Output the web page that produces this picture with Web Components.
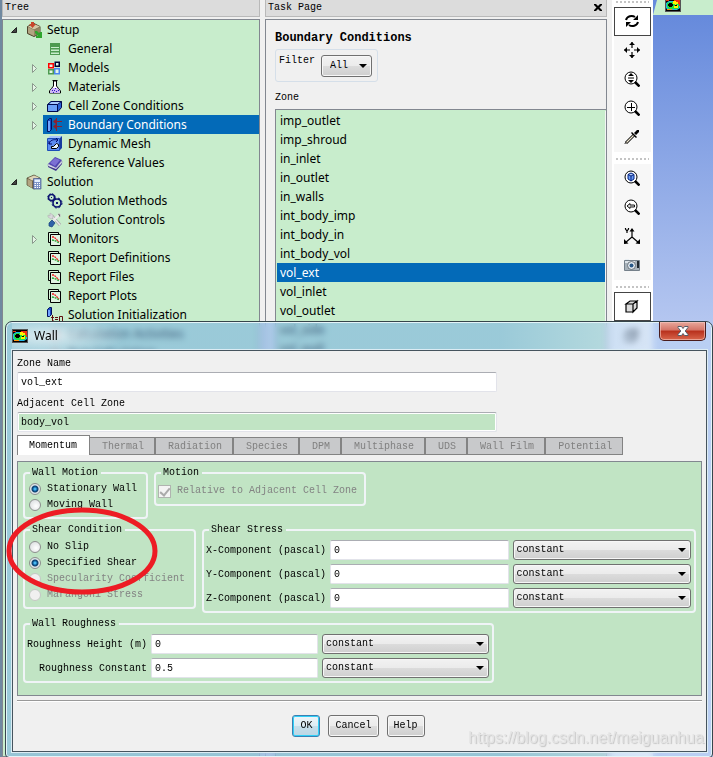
<!DOCTYPE html>
<html lang="en">
<head>
<meta charset="utf-8">
<title>Boundary Conditions - Wall</title>
<style>
html,body{margin:0;height:100%}
body{overflow:hidden;background:#f0f0f0;color:#000;font:10px/12px "Liberation Mono",monospace}
</style>
</head>
<body>
<fluent-desktop></fluent-desktop>

<script>
const ICONS = {
  close:'<path d="M1 1h2l2 2 2-2h2v1L6.500 4.500 9 7v1H7L5 6 3 8H1V7l2.500-2.500L1 2z" fill="#000"/>',
  contour:'<path fill="#555" d="M0 0h16v14H0z"/><path fill="#000" d="M1 1h14v12H1z"/><path fill="#20b8e8" d="M1 5l3-2h11v7l-3 2H3l-2-2z"/><path fill="#20e040" d="M2 5l3-1h9v6l-2 1H4L2 9z"/><path fill="#fff200" d="M8 3h6v3h-3v1h2v3H9V8h1V6H8z"/><path fill="#f03010" d="M1 2h3v1H1zM9 2h6v2h-4V3H9zM13 4h2v4h-1V6h-1z"/><path fill="#000" d="M4 5h3v1h1v2H7v1H4V8H3V6h1zM10 7h2v1h-2z"/><path fill="#ff9010" d="M2 11h5v1H2z"/>',
  box:'<path fill="#776a4c" stroke="#4f452c" d="M1.500 4.500 8 1.500l6 3v7l-6 3-6.500-3z"/><path fill="#b3a582" d="M2 5l6 3v6l-6-3z"/><path fill="#938562" d="M8 8l6-3v6l-6 3z"/><path fill="#d4c8a6" d="M2 4.500 8 2l6 2.500L8 7.500z"/><path fill="#c8452c" d="M5 0h3v2h2L6.500 6 3 2h2z"/><path fill="#2fa52d" d="M9 9h2l2.500 2.500V10H16v6h-6v-2h2L9 11z"/>',
  general:'<path fill="#4d9a50" d="M3 2h10v12H3z"/><path fill="#c8edcc" d="M4 6h8v1H4zM4 8.500h8v1.500H4zM4 11.500h8V13H4z"/>',
  models:'<g fill="#fff8" stroke-width="1.500"><path stroke="#f00" d="M1.750 3.750h4.500v4H1.750z"/><path stroke="#003" d="M8.250 2.250h4v4h-4z"/><path stroke="#4d9a50" d="M1.750 9.750h4.500v4H1.750z"/><path stroke="#4a86f0" d="M7.750 8.750h4.500v5H7.750z"/></g>',
  materials:'<path fill="#fff" stroke="#000" d="M5.500 1.500h5M6.500 2v5L2.500 12v2h11v-2L9.500 7V2z"/><path fill="#cbb8f4" d="M5 9h6l2 3.500V14H3v-1.500z"/><path fill="#3010c8" d="M5 11h1v1H5zM8 9h1v1H8zM9 12h1v1H9zM11 11h1v1h-1zM6 13h1v1H6zM7 11h1v1H7z"/>',
  cell:'<path fill="#2b62d6" stroke="#000a50" d="M.5 6.500 4 3.500h10.500v6L11 13.500H.5z"/><path fill="#6ba0f8" d="M1 7h9v6H1z"/><path fill="#a8c8ff" d="M4.500 4H14l-3 2.500H2z"/><path stroke="#000a50" fill="none" d="M.5 6.500h10v7m0-7 4-3"/>',
  boundary:'<path fill="#1a48c0" stroke="#001060" d="M.5 3.500 2.500 1.500h2v11l-2 2h-2z"/><path fill="#72a4ff" d="M1 4h2v10H1z"/><path fill="none" stroke="#8c2030" d="M9.500 1v13M7 4.500h8M7 9.500h8"/><path fill="#8c2030" d="M6 4.500 9 2v5zM6 9.500 9 7v5z"/>',
  mesh:'<path fill="#5c8cf0" stroke="#1c4db8" d="M.5 2.500h12v12H.5z"/><path fill="#a8c4ff" d="M1 2 3 0h12l-2 2z"/><path fill="#173ca0" d="M13 2l2-2v12l-2 2z"/><path fill="none" stroke="#000b70" d="M2 8c1-4 5-5 8-4M9 2l2 2-2 2M2 5v3h3"/><path fill="#e8f4ff" stroke="#000" d="M4.500 12.500v-2h2l3-3 2 1v2l-2 2z"/>',
  book:'<path fill="#5144b0" d="M1 9 8 2l7 3-6 8z"/><path fill="#7c70d4" d="M3 8l5-5 5 2-5 6z"/><path fill="#e8e8f4" stroke="#8880b8" stroke-width=".5" d="M1 9l8 4 6-7v2l-6 7-8-4z"/><path fill="#40368c" d="M1 11l8 3 6-6v1l-6 7-8-4z"/>',
  calc:'<path fill="#776a4c" stroke="#4f452c" stroke-width=".7" d="M1 4 8 1l6 3v8l-6 3-7-4z"/><path fill="#b3a582" d="M1.500 5 6 7v7l-4.500-3z"/><path fill="#ded5b8" d="M2 4 8 1.500l5 2L6 6.500z"/><path fill="#7d94c8" stroke="#4b5c8c" stroke-width=".7" d="M7.500 4.500H15V15H7.500z"/><path fill="#e4f0ff" d="M8.500 5.500H14V8H8.500z"/><path fill="#fff" d="M8.500 9H10v1H8.500zM11 9h1v1h-1zM13 9h1v1h-1zM8.500 11H10v1H8.500zM11 11h1v1h-1zM13 11h1v1h-1zM8.500 13H10v1H8.500zM11 13h1v1h-1zM13 13h1v1h-1z"/>',
  methods:'<g fill="none" stroke="#0c1470"><circle cx="4.500" cy="4.500" r="3" stroke-width="1.500"/><circle cx="4.500" cy="4.500" r="3.800" stroke-dasharray="1.500 1.500"/><circle cx="10" cy="10" r="4" stroke-width="1.600"/><circle cx="10" cy="10" r="5" stroke-dasharray="2 2"/></g><path fill="#0c1470" d="M4 4h1v1H4zM9 9h2v2H9z"/>',
  controls:'<path stroke="#a8a8a8" stroke-width="3" d="M5 4l8 9"/><path stroke="#e8e8ea" stroke-width="1.500" d="M4 3l9 10"/><path fill="#d8d8dc" stroke="#aaa" stroke-width=".5" d="M1 3l2 1V1l3 2v3L4 7 1 5z"/><path stroke="#ececec" stroke-width="2" d="M6 9l7-7"/><path stroke="#bbb" d="M11 2h2v3"/><path fill="#2f62a8" stroke="#163e78" stroke-width=".7" d="M2 11l3-3 3 3-3 4-3-1z"/>',
  monitor:'<path fill="#d8f4da" stroke="#000" d="M1.500 1.500h10v10h-10z"/><path fill="#e0f4e2" stroke="#000" d="M3.500 3.500h10v11h-10z"/><path fill="none" stroke="#f02020" stroke-width="1.300" stroke-dasharray="2 .7" d="M5 6h2l2 2 3 3"/><path fill="none" stroke="#20a030" stroke-width="1.300" stroke-dasharray="2 .7" d="M5 9l4 1 3 2"/>',
  init:'<path fill="#1a48c0" stroke="#001060" d="M.5 2.500l2-2h2v7l-2 2h-2z"/><path fill="#72a4ff" d="M1 3h2v6H1z"/><path fill="none" stroke="#601010" d="M5.500 8v6H7M4 10.500h3M8 10.500h3M8 12.500h3M12.500 15V9.500h3V15z"/>',
  star:'<path fill="#e8a080" d="M8 2l2 4 5 1-4 3 1 5-4-3-4 3 1-5-4-3 5-1z"/>',
  open:'<path fill="#444" stroke="#222" d="M9.500 5.500v5h-5z"/>',
  closed:'<path fill="#e4f6e6" stroke="#8b988d" d="M5.500 4.500l4 4-4 4z"/>',
  rotate:'<g fill="none" stroke="#000" stroke-width="2"><path d="M2 7c1-4 6-5 9-3M14 9c-1 4-6 5-9 3"/></g><path fill="#000" d="M14 2v5H9zM2 14V9h5z"/>',
  move:'<path stroke="#000" fill="none" stroke-width="1.200" d="M8 0v6M8 10v6M0 8h6M10 8h6"/><path d="M8 0l3 3H5zM8 16l3-3H5zM0 8l3-3v6zM16 8l-3-3v6z"/>',
  zoomfit:'<circle cx="7" cy="7" r="6" fill="#fff" stroke="#000"/><path d="M7 2l3 3H4zM7 12l3-3H4zM4 6.500h6v1H4z"/><path stroke="#000" stroke-width="2.500" d="M11 11l4.500 4.500"/>',
  zoomin:'<circle cx="7" cy="7" r="6" fill="#fff" stroke="#000"/><path stroke="#000" d="M3 7.500h8M7.500 3v8"/><path stroke="#000" stroke-width="2.500" d="M11 11l4.500 4.500"/>',
  picker:'<path stroke="#000" stroke-width="3" d="M10 6l-8 8"/><path stroke="#eee6d0" stroke-width="1.300" d="M10 6l-8 8"/><path d="M8 3l5 5-1 1-5-5zM10 4l3-3h2v2l-3 3zM0 15l2-2 1 1z"/>',
  zoombox:'<circle cx="7" cy="7" r="6" fill="#fff" stroke="#000"/><path fill="#6b9cf4" stroke="#002080" d="M4 4.500 7 3l3 1.500V9L7 11 4 9zM4 4.500 7 6l3-1.500M7 6v5"/><path stroke="#000" stroke-width="2.500" d="M11 11l4.500 4.500"/>',
  zoomback:'<circle cx="7" cy="7" r="6" fill="#fff" stroke="#000"/><path fill="#ddd" stroke="#000" stroke-width=".9" d="M3 7l3-2.500V6h4.500v2H6v1.500z"/><path stroke="#000" stroke-width="2.500" d="M11 11l4.500 4.500"/>',
  axes:'<path stroke="#000" fill="none" stroke-width="1.200" d="M8 1v8l-7 6M8 9l7 6M1.500 0v1l1.500 2 1.500-2V0M3 3v2"/><path d="M8 0l2.500 3.500h-5zM0 16v-5l4.500 4.500zM16 16v-5l-4.500 4.500z"/>',
  camera:'<path fill="#a8b2ba" stroke="#75808a" d="M.5 3.500h15v10H.5z"/><path fill="#dde3e8" d="M1 4h10v2H1z"/><path fill="#e8eef2" d="M1 2h4v1H1z"/><circle cx="7.500" cy="8.500" r="4" fill="#e4eaf0" stroke="#6a747c"/><circle cx="7.500" cy="8.500" r="2" fill="#285888"/><path fill="#202830" d="M13 4h2v7h-2z"/>',
  cube:'<path fill="#ddd" stroke="#000" stroke-width="1.200" d="M2 6h7v8H2zM2 6l4-3h7L9 6zM9 14l4-4V3L9 6z"/>'
};
const define = (tag, css, html) => customElements.define(tag, class extends HTMLElement {
  connectedCallback() {
    if (this.shadowRoot) return;
    const t = document.createElement('template');
    t.innerHTML = `<style>*{box-sizing:border-box}${css}</style>` + (typeof html === 'function' ? html(this) : html);
    this.attachShadow({mode:'open'}).append(t.content.cloneNode(true));
  }
});
const a = (el, n, d = '') => el.getAttribute(n) ?? d;

define('ui-icon', ':host{display:block;width:16px;height:16px;flex:none}svg{display:block;width:100%;height:100%}',
  el => `<svg viewBox="0 0 ${a(el,'box','16 16')}" aria-hidden="true">${ICONS[a(el,'name')] || ''}</svg>`);

define('panel-title', `:host{display:flex;align-items:center;justify-content:space-between;height:17px;padding:0 2px 1px;
  background:#dcdcdc;border:solid #b9b9b9;border-width:0 1px 1px}
  ::slotted(button){border:0;background:none;padding:0 1px;display:flex}`, '<slot></slot><slot name="action"></slot>');

define('tree-item', `:host{display:flex;align-items:center;height:19px;padding-left:4px;font:12px/19px "Noto Sans",sans-serif}
  :host([level="1"]){padding-left:24px}
  .row{display:flex;align-items:center;flex:1;gap:5px;height:19px;padding-left:3px;white-space:nowrap}
  :host([level="1"]) .row{padding-left:4px}
  :host([selected]) .row{background:#036ab8;color:#fff}
  .arrow{width:16px;flex:none}`,
  el => `<span class="arrow">${el.hasAttribute('arrow') ? `<ui-icon name="${a(el,'arrow')}"></ui-icon>` : ''}</span><span class="row"><ui-icon name="${a(el,'icon')}"></ui-icon><slot></slot></span>`);

define('outline-tree', `:host{display:flex;flex-direction:column;min-width:0;min-height:0}
  .tree{flex:1;min-height:0;overflow:hidden;margin-top:2px;border:1px solid #828790;background:#c8edcc}`,
  `<panel-title>Tree</panel-title><div class="tree" role="tree">
  <tree-item icon="box" arrow="open">Setup</tree-item>
  <tree-item level="1" icon="general">General</tree-item>
  <tree-item level="1" icon="models" arrow="closed">Models</tree-item>
  <tree-item level="1" icon="materials" arrow="closed">Materials</tree-item>
  <tree-item level="1" icon="cell" arrow="closed">Cell Zone Conditions</tree-item>
  <tree-item level="1" icon="boundary" arrow="closed" selected>Boundary Conditions</tree-item>
  <tree-item level="1" icon="mesh">Dynamic Mesh</tree-item>
  <tree-item level="1" icon="book">Reference Values</tree-item>
  <tree-item icon="calc" arrow="open">Solution</tree-item>
  <tree-item level="1" icon="methods">Solution Methods</tree-item>
  <tree-item level="1" icon="controls">Solution Controls</tree-item>
  <tree-item level="1" icon="monitor" arrow="closed">Monitors</tree-item>
  <tree-item level="1" icon="monitor">Report Definitions</tree-item>
  <tree-item level="1" icon="monitor">Report Files</tree-item>
  <tree-item level="1" icon="monitor">Report Plots</tree-item>
  <tree-item level="1" icon="init">Solution Initialization</tree-item>
  <tree-item level="1" icon="star">Calculation Activities</tree-item>
  <tree-item level="1" icon="star">Run Calculation</tree-item>
  </div>`);

define('drop-down', `:host{display:grid;min-width:0}
  select{grid-area:1/1;appearance:none;width:100%;min-width:0;height:20px;margin:0;padding:0 18px 0 3px;font:inherit;color:#000;
   border:1px solid #707070;border-radius:3px;background:linear-gradient(#f2f2f2,#ebebeb 50%,#dcdcdc 50%,#cfcfcf);box-shadow:inset 0 0 0 1px #f7f7f7}
  :host([compact]) select{height:22px;padding:0 22px 0 8px}
  i{grid-area:1/1;place-self:center end;margin-right:5px;border:4px solid transparent;border-top-color:#000;border-bottom:0;pointer-events:none}`,
  el => `<select aria-label="${a(el,'label')}"><option>${a(el,'value')}</option></select><i></i>`);

define('zone-list', `:host{display:block;flex:1;min-height:0;overflow:hidden;border:solid #828790;border-width:1px 0 0 1px;background:#c8edcc;padding:1px 0 0 1px;
  font:12px/19px "Noto Sans",sans-serif}
  ul{margin:0;padding:0;list-style:none;border-right:1px solid #f4f4f4}li{height:19px;padding-left:3px}li.on{background:#036ab8;color:#fff}`,
  '<ul>' + ['imp_outlet','imp_shroud','in_inlet','in_outlet','in_walls','int_body_imp','int_body_in','int_body_vol','vol_ext','vol_inlet','vol_outlet','vol_side','vol_wall']
   .map(z => `<li${z === 'vol_ext' ? ' class="on"' : ''}>${z}</li>`).join('') + '</ul>');

define('task-page', `:host{display:flex;flex-direction:column;min-width:0;min-height:0}
  .page{flex:1;min-height:0;overflow:hidden;display:flex;flex-direction:column;margin-top:2px;border:1px solid #828790;padding:11px 0 0 9px}
  h1{margin:0 0 4px;font-size:12px;line-height:14px}
  .filter{align-self:flex-start;display:flex;gap:6px;padding:5px 5px 4px 3px;border:1px solid #d5dfe9;border-radius:3px;margin-bottom:10px}
  .zone{margin-bottom:5px}`,
  `<panel-title>Task Page<button slot="action" aria-label="Close"><ui-icon name="close" box="10 10" style="width:10px;height:10px"></ui-icon></button></panel-title>
  <div class="page"><h1>Boundary Conditions</h1>
  <div class="filter"><span>Filter</span><drop-down compact label="Filter" value="All"></drop-down></div>
  <span class="zone">Zone</span><zone-list></zone-list></div>`);

define('tool-button', `:host{display:block}button{display:grid;place-items:center;width:100%;height:29px;margin:0;padding:0 2px 2px 0;border:1px solid transparent;background:#f7f7f7}
  :host([checked]) button{background:#fff;border-color:#444}`,
  el => `<button aria-label="${a(el,'icon')}"><ui-icon name="${a(el,'icon')}"></ui-icon></button>`);

define('view-toolbar', `:host{display:block;background:#fff;padding:0 2px;overflow:hidden}
  hr{height:2px;margin:6px 2px 4px;border:0;background:repeating-linear-gradient(90deg,#c4c4c4 0 2px,transparent 2px 4px)}
  hr:first-of-type{margin:1px 2px 4px}`,
  '<hr>' + [['rotate',1],['move'],['zoomfit'],['zoomin'],['picker'],0,['zoombox'],['zoomback'],['axes'],['camera'],0,['cube',1],['cube']]
   .map(t => t ? `<tool-button icon="${t[0]}"${t[1] ? ' checked' : ''}></tool-button>` : '<hr>').join(''));

define('graphics-view', `:host{display:flex;flex-direction:column;background:linear-gradient(#668adc 15px,#b4c6f0 320px)}
  .tab{height:15px;padding-left:12px;background:#c8edcc;overflow:hidden;display:flex;align-items:flex-end;clip-path:polygon(4px 0,100% 0,100% 100%,0 100%)}
  ui-icon{margin-bottom:2px}`,
  '<div class="tab"><ui-icon name="contour" box="16 14"></ui-icon></div>');

define('group-box', `:host{display:block;min-width:0}
  fieldset{margin:0;min-width:0;height:100%;padding:0;border:2px solid #f0f4f7;border-radius:4px}
  legend{margin-left:5px;padding:0 3px 0 2px;line-height:12px}
  .body{padding:var(--group-pad,2px)}`,
  el => `<fieldset><legend>${a(el,'label')}</legend><div class="body"><slot></slot></div></fieldset>`);

define('choice-item', `:host{display:block}label{display:flex;align-items:center;gap:6px;height:16px;white-space:nowrap}
  input{appearance:none;flex:none;margin:0;width:12px;height:12px;border:1px solid #8e8f8f;border-radius:50%;background:radial-gradient(circle at 60% 60%,#fff,#d4d8da)}
  input:checked{background:radial-gradient(circle at 50% 50%,#48b8f0 0 1px,#0c5c9c 2px,#10406c 3px,#dfe6ea 4px)}
  input:disabled{border-color:#c4c8c4;background:#f0f0f0}
  input[type=checkbox]{width:13px;height:13px;border-radius:0;border-color:#b0b4b0;background:#f4f4f4;display:grid;place-items:center}
  input[type=checkbox]:checked::after{content:"";width:4px;height:8px;border:solid #aaa;border-width:0 2px 2px 0;transform:rotate(40deg)}
  :host([disabled]) label{color:#838383}`,
  el => `<label><input type="${a(el,'type','radio')}"${el.hasAttribute('checked') ? ' checked' : ''}${el.hasAttribute('disabled') ? ' disabled' : ''}><slot></slot></label>`);

define('text-field', `:host{display:block}label{display:block;line-height:12px;margin-bottom:2px}
  input{display:block;width:100%;height:20px;margin:0;padding:0 3px;font:inherit;color:#000;border:1px solid #e2e3ea;border-top-color:#abadb3;border-radius:2px;background:#fff}
  input[readonly]{background:#c1e4c4;box-shadow:inset 0 0 0 1px #fff}`,
  el => `<label for="f">${a(el,'label')}</label><input id="f" value="${a(el,'value')}"${el.hasAttribute('readonly') ? ' readonly' : ''}>`);

define('value-grid', `:host{display:grid;grid-template-columns:max-content minmax(0,1fr) minmax(0,1fr);gap:4px;align-items:center}
  label{text-align:right;padding:2px 0 0}
  input{width:100%;min-width:0;height:20px;margin:0;padding:0 3px;font:inherit;color:#000;border:1px solid #e2e3ea;border-top-color:#abadb3;border-radius:2px;background:#fff}`,
  el => a(el,'rows').split('|').map((r, i) => { const [l, v] = r.split('=');
    return `<label for="v${i}">${l}</label><input id="v${i}" value="${v}"><drop-down label="${l} profile" value="constant"></drop-down>`; }).join(''));

define('tab-strip', `:host{display:flex;align-items:flex-end;height:20px}
  button{height:18px;margin:0;padding:1px 10px 0 12px;font:inherit;color:#808080;background:#c8c9cb;border:solid #838383;border-width:1px 2px 1px 0}
  button:last-child{border-right-width:1px}
  button.on{height:20px;padding:0 12px 0 11px;color:#000;background:#fff;border-width:1px 1px 0}`,
  ['Momentum','Thermal','Radiation','Species','DPM','Multiphase','UDS','Wall Film','Potential']
   .map((t, i) => `<button role="tab" aria-selected="${!i}"${i ? '' : ' class="on"'}>${t}</button>`).join(''));

define('push-button', `:host{display:block}button{height:22px;margin:0;padding:0 6px;font:inherit;color:#000;border:1px solid #707070;border-radius:3px;
   background:linear-gradient(#f2f2f2,#ebebeb 50%,#dcdcdc 50%,#cfcfcf);box-shadow:inset 0 0 0 1px #f7f7f7}
  :host([primary]) button{padding:0 7px;border-color:#3c7fb1;background:linear-gradient(#eef5f9,#ddecf4 50%,#c6dfeb 50%,#bcd6e4);box-shadow:inset 0 0 0 1px #2fd0f8}`,
  '<button><slot></slot></button>');

define('wall-dialog', `:host{display:block;padding:0 5px 5px 6px;border:1px solid #36454c;border-radius:7px 7px 4px 4px;
   background:linear-gradient(90deg,rgba(108,167,228,.5) 70%,rgba(190,215,245,.5) 94%);
   backdrop-filter:blur(3px);box-shadow:inset 0 0 0 1px #e4f4f8}
  header{display:flex;align-items:flex-start;height:28px}
  .name{display:flex;align-items:center;gap:6px;flex:1;height:27px;font:12px/19px "Noto Sans",sans-serif;background:radial-gradient(ellipse 80px 20px at 34px 14px,#ffffffa0,transparent)}
  .close{width:47px;height:19px;margin:0 1px 0 0;padding:0;border:1px solid #4a1c1c;border-top:0;border-radius:0 0 5px 5px;display:grid;place-items:center;
   background:linear-gradient(#e8a89c,#d47466 45%,#b8301c 50%,#d8664c);box-shadow:inset 0 0 0 1px #f4c8c0a0}
  .close svg{width:12px;height:10px}
  .client{background:#f0f0f0;border:1px solid #46545e;box-shadow:0 0 0 1px #dcecf4;padding:7px 4px 14px}
  .fields{width:70%;display:grid;gap:6px}
  tab-strip{margin-top:3px}
  .panel{margin-top:6px;border:1px solid #828790;background:#c1e4c4;padding:5px 5px 12px;display:grid;gap:5px}
  .line{display:flex;align-items:flex-start;gap:6px}
  .wide{flex:1}.rough{flex:0 1 471px}
  .one{--group-pad:2px 9px 4px 4px}.two{--group-pad:4px 7px 5px 2px}.three{--group-pad:3px 9px 4px 4px}.vals{--group-pad:4px 3px 3px 2px}
  .sep{height:2px;margin:4px 0 13px;border:0;background:linear-gradient(#999 50%,#fff 50%)}
  .actions{display:flex;justify-content:center;gap:8px;padding-right:2px}`,
  `<header><div class="name"><ui-icon name="contour" box="16 14"></ui-icon>Wall</div>
   <button class="close" aria-label="Close"><svg viewBox="0 0 12 10"><path d="M1 .5h3.500L6 2.500 7.500.5H11v1L8.200 5 11 8.500v1H7.500L6 7.500 4.500 9.500H1v-1L3.800 5 1 1.500z" fill="#fff" stroke="#555c68"/></svg></button></header>
  <div class="client">
   <div class="fields"><text-field label="Zone Name" value="vol_ext"></text-field><text-field label="Adjacent Cell Zone" value="body_vol" readonly></text-field></div>
   <tab-strip role="tablist"></tab-strip>
   <div class="panel">
    <div class="line">
     <group-box class="one" label="Wall Motion"><choice-item checked>Stationary Wall</choice-item><choice-item>Moving Wall</choice-item></group-box>
     <group-box class="two" label="Motion"><choice-item type="checkbox" checked disabled>Relative to Adjacent Cell Zone</choice-item></group-box>
    </div>
    <div class="line">
     <group-box class="three" label="Shear Condition"><choice-item>No Slip</choice-item><choice-item checked>Specified Shear</choice-item><choice-item disabled>Specularity Coefficient</choice-item><choice-item disabled>Marangoni Stress</choice-item></group-box>
     <group-box class="wide vals" label="Shear Stress"><value-grid rows="X-Component (pascal)=0|Y-Component (pascal)=0|Z-Component (pascal)=0"></value-grid></group-box>
    </div>
    <div class="line"><group-box class="rough vals" label="Wall Roughness"><value-grid rows="Roughness Height (m)=0|Roughness Constant=0.5"></value-grid></group-box></div>
   </div>
   <hr class="sep">
   <div class="actions"><push-button primary>OK</push-button><push-button>Cancel</push-button><push-button>Help</push-button></div>
  </div>`);

define('red-ring', ':host{display:block;pointer-events:none}svg{display:block}',
  '<svg width="154" height="90" viewBox="0 0 154 90"><ellipse cx="77" cy="45" rx="73" ry="41" fill="none" stroke="#ed1c24" stroke-width="5"/></svg>');

define('fluent-desktop', `:host{display:block;position:relative;height:100%;overflow:hidden;background:#8494a4}
  .app{display:grid;grid-template-columns:258px minmax(0,1fr) 41px 60px;height:100%;padding-left:2px;background:linear-gradient(90deg,#7088a0 2px,#f0f0f0 2px)}
  task-page{margin:0 5px}
  wall-dialog{position:absolute;left:5px;right:0;top:321px}
  red-ring{position:absolute;left:5px;top:506px}
  .mark{position:absolute;right:9px;bottom:9px;font:16px/20px "Liberation Sans",sans-serif;color:#e4e4e4;text-shadow:1px 1px 1px #c4c4c4}`,
  `<div class="app"><outline-tree></outline-tree><task-page></task-page><view-toolbar></view-toolbar><graphics-view></graphics-view></div>
  <wall-dialog role="dialog" aria-label="Wall"></wall-dialog><red-ring></red-ring><span class="mark">https://blog.csdn.net/meiguanhua</span>`);
</script>
</body>
</html>
